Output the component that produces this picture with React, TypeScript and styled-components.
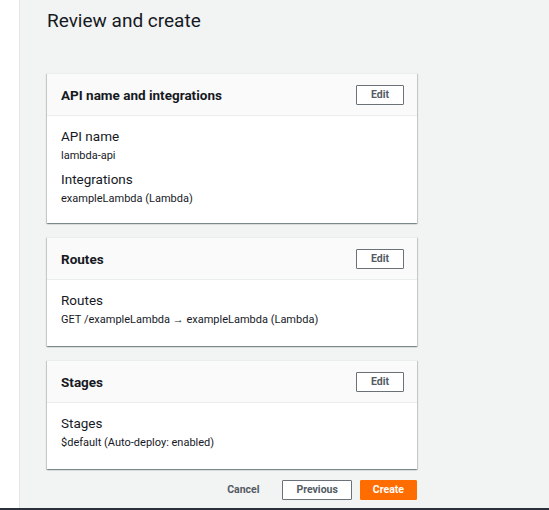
import React from "react";
import styled, { createGlobalStyle } from "styled-components";

const GlobalStyle = createGlobalStyle`
  body {
    margin: 0;
    font-family: Roboto, "Liberation Sans", sans-serif;
    color: #16191f;
  }
`;

const SPage = styled.div`
  display: flex;
  flex-direction: column;
  height: 510px;
  overflow: hidden;
`;
const SShell = styled.div`
  display: flex;
  flex: 1;
  min-height: 0;
`;
const SSideStrip = styled.div`
  width: 19px;
  background: #ffffff;
  border-right: 1px solid #e4e6e6;
`;
const SMain = styled.main`
  flex: 1;
  background: #f2f3f3;
  padding: 8px 0 0 27px;
`;
const SBottomBar = styled.div`
  height: 2px;
  background: #2a313b;
`;
const SHeading = styled.h1`
  margin: 0 0 39px;
  font-size: 19px;
  font-weight: 400;
  line-height: 26px;
  color: #16191f;
`;
const SStack = styled.div`
  width: 370px;
  display: flex;
  flex-direction: column;
  gap: 14px;
`;
const SCard = styled.section`
  background: #ffffff;
  border-top: 1px solid #eaeded;
  box-shadow: 0 1px 1px 0 rgba(0, 28, 36, 0.3),
    1px 1px 1px 0 rgba(0, 28, 36, 0.15), -1px 1px 1px 0 rgba(0, 28, 36, 0.15);
`;
const SCardHeader = styled.header`
  display: flex;
  align-items: center;
  justify-content: space-between;
  height: 41px;
  padding: 0 13px 0 14px;
  background: #fafafa;
  border-bottom: 1px solid #eaeded;
`;
const SCardTitle = styled.h2`
  margin: 0;
  font-size: 13.5px;
  font-weight: 700;
  color: #16191f;
`;
const SButton = styled.button<{ $variant?: "normal" | "primary" | "link" }>`
  height: 20px;
  padding: 0
    ${({ $variant }) =>
      $variant === "link" ? "0" : $variant === "primary" ? "12px" : "13px"};
  font-family: inherit;
  font-size: 10.5px;
  font-weight: 700;
  line-height: 18px;
  border-radius: 1px;
  cursor: pointer;
  border: 1px solid
    ${({ $variant }) =>
      $variant === "primary"
        ? "#ff6d00"
        : $variant === "link"
        ? "transparent"
        : "#6b7178"};
  background: ${({ $variant }) =>
    $variant === "primary" ? "#ff6d00" : $variant === "link" ? "transparent" : "#ffffff"};
  color: ${({ $variant }) => ($variant === "primary" ? "#ffffff" : "#545b64")};
`;
const SEditButton = styled(SButton)`
  width: 48px;
  padding: 0;
`;
const SCardBody = styled.div<{ $single?: boolean }>`
  padding: 10px 14px ${({ $single }) => ($single ? "16px" : "14px")};
  display: flex;
  flex-direction: column;
`;
const SLabel = styled.div<{ $first?: boolean }>`
  margin-top: ${({ $first }) => ($first ? "0" : "3px")};
  font-size: 13.5px;
  line-height: 20px;
  color: #16191f;
`;
const SValue = styled.div`
  font-size: 11px;
  line-height: 20px;
  color: #16191f;
`;
const SActions = styled.div`
  width: 370px;
  display: flex;
  justify-content: flex-end;
  align-items: center;
  gap: 8px;
  margin-top: 11px;
`;
const SCancel = styled(SButton)`
  margin-right: 14px;
`;

type Field = { label: string; value: string };
type Section = { title: string; fields: Field[] };

const sections: Section[] = [
  {
    title: "API name and integrations",
    fields: [
      { label: "API name", value: "lambda-api" },
      { label: "Integrations", value: "exampleLambda (Lambda)" },
    ],
  },
  {
    title: "Routes",
    fields: [
      { label: "Routes", value: "GET /exampleLambda \u2192 exampleLambda (Lambda)" },
    ],
  },
  {
    title: "Stages",
    fields: [{ label: "Stages", value: "$default (Auto-deploy: enabled)" }],
  },
];

const ReviewCard = ({ section }: { section: Section }) => (
  <SCard>
    <SCardHeader>
      <SCardTitle>{section.title}</SCardTitle>
      <SEditButton>Edit</SEditButton>
    </SCardHeader>
    <SCardBody $single={section.fields.length === 1}>
      {section.fields.map((f, i) => (
        <React.Fragment key={f.label}>
          <SLabel $first={i === 0}>{f.label}</SLabel>
          <SValue>{f.value}</SValue>
        </React.Fragment>
      ))}
    </SCardBody>
  </SCard>
);

const App = () => {
  return (
    <SPage>
      <GlobalStyle />
      <SShell>
        <SSideStrip />
        <SMain>
          <SHeading>Review and create</SHeading>
          <SStack>
            {sections.map((s) => (
              <ReviewCard key={s.title} section={s} />
            ))}
          </SStack>
          <SActions>
            <SCancel $variant="link">Cancel</SCancel>
            <SButton>Previous</SButton>
            <SButton $variant="primary">Create</SButton>
          </SActions>
        </SMain>
      </SShell>
      <SBottomBar />
    </SPage>
  );
};

export default App;
